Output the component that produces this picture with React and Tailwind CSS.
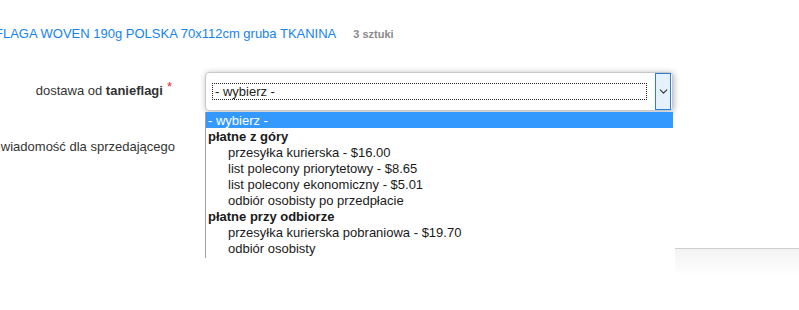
import { ChevronDown } from "lucide-react";

const groups = [
  {
    label: "płatne z góry",
    options: [
      "przesyłka kurierska - $16.00",
      "list polecony priorytetowy - $8.65",
      "list polecony ekonomiczny - $5.01",
      "odbiór osobisty po przedpłacie",
    ],
  },
  {
    label: "płatne przy odbiorze",
    options: ["przesyłka kurierska pobraniowa - $19.70", "odbiór osobisty"],
  },
];

function DeliverySelect() {
  return (
    <div className="relative">
      <div className="flex items-center w-[468px] h-[39px] bg-white border border-[#c9c9c9] rounded-[4px] shadow-[1px_1px_6px_rgba(0,0,0,0.3)] pl-[6px] pr-[1px]">
        <div className="w-[435px] h-[17px] border border-dotted border-[#222] flex items-center pl-[2px] text-[13px] text-[#222] leading-none">
          - wybierz -
        </div>
        <div className="ml-auto w-[16px] h-[37px] bg-[#e5f1fb] border border-[#2a7fd4] flex items-center justify-center">
          <ChevronDown size={13} strokeWidth={2} className="text-[#333]" />
        </div>
      </div>
      {/* open option list */}
      <div className="absolute left-0 top-[40px] w-[468px] h-[146px] overflow-hidden bg-white border-l border-[#a0a0a0] text-[13px] leading-[16px] text-[#1a1a1a]">
        <div className="bg-[#3399ff] text-white pl-[2px] h-[16px] pt-[1px]">- wybierz -</div>
        {groups.map((g) => (
          <div key={g.label}>
            <div className="font-bold pl-[2px] h-[16px] pt-[1px]">{g.label}</div>
            {g.options.map((o) => (
              <div key={o} className="pl-[22px] h-[16px] pt-[1px]">
                {o}
              </div>
            ))}
          </div>
        ))}
      </div>
    </div>
  );
}

export default function App() {
  return (
    <div className="relative w-[799px] h-[310px] bg-white overflow-hidden font-['Liberation_Sans',Arial,sans-serif]">
      <div className="flex items-baseline pt-[24px] whitespace-nowrap">
        <a className="-ml-[5px] text-[13px] text-[#1583ee]">
          FLAGA WOVEN 190g POLSKA 70x112cm gruba TKANINA
        </a>
        <span className="ml-[17px] text-[11px] font-bold text-[#8a8a8a]">3 sztuki</span>
      </div>

      <div className="flex items-center mt-[28px]">
        <label className="w-[175px] text-right text-[13px] text-[#333] pr-[3px]">
          dostawa od <b>tanieflagi</b>
          <sup className="text-[#e0262c] ml-[4px] text-[13px] top-[-4px]">*</sup>
        </label>
        <div className="ml-[30px]">
          <DeliverySelect />
        </div>
      </div>

      <div className="flex mt-[26px]">
        <label className="w-[175px] text-right text-[13px] text-[#333] whitespace-nowrap">
          wiadomość dla sprzedającego
        </label>
      </div>

      {/* edge of a panel partly hidden behind the list */}
      <div className="absolute left-[675px] top-[248px] w-[124px] h-[28px] border-t border-[#cfcfcf] bg-gradient-to-b from-[#f3f3f3] to-white" />
    </div>
  );
}
